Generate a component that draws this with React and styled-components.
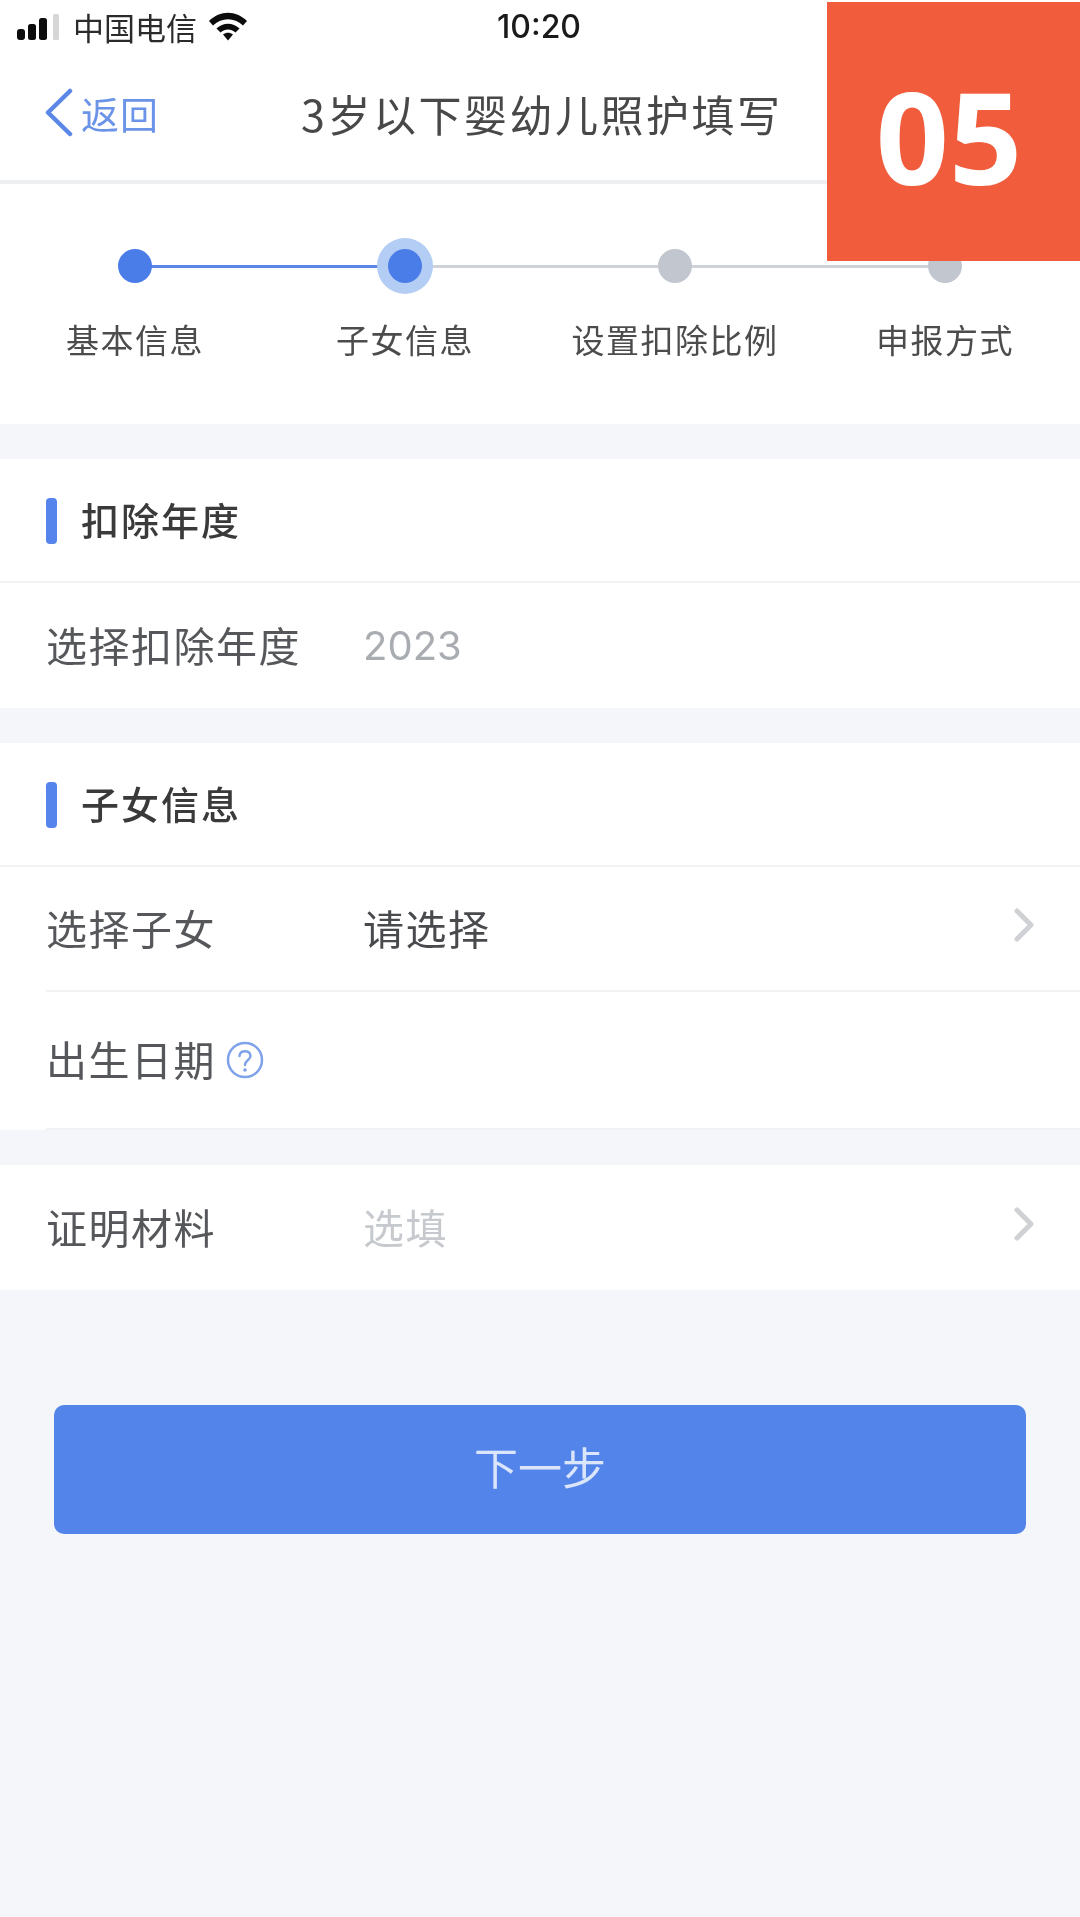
import React from "react";
import styled, { createGlobalStyle } from "styled-components";

const GlobalStyle = createGlobalStyle`
  html, body {
    margin: 0;
    padding: 0;
    background: #f4f6fa;
  }
  * {
    box-sizing: border-box;
  }
`;

const CJK = `"Noto Sans CJK SC", "Noto Sans", sans-serif`;

const steps = [
  { label: "基本信息", state: "done" },
  { label: "子女信息", state: "current" },
  { label: "设置扣除比例", state: "todo" },
  { label: "申报方式", state: "todo", last: true },
];

function Chevron() {
  return (
    <ChevronIcon width="24" height="36" viewBox="0 0 24 36" fill="none">
      <path d="M4 4 L18 18 L4 32" stroke="#cfd1d4" strokeWidth="5" strokeLinecap="round" strokeLinejoin="round" />
    </ChevronIcon>
  );
}

export default function App() {
  return (
    <Page>
      <GlobalStyle />
      <Header>
        <StatusBar>
          <StatusLeft>
            <svg width="44" height="28" viewBox="0 0 44 28">
              <rect x="1" y="17" width="8" height="11" rx="3" fill="#0c0c0c" />
              <rect x="12" y="12" width="8" height="16" rx="2.500" fill="#0c0c0c" />
              <rect x="23" y="6" width="8" height="22" rx="2.500" fill="#0c0c0c" />
              <rect x="37" y="2" width="6" height="26" rx="1.500" fill="#d6d6d6" />
            </svg>
            <Carrier>中国电信</Carrier>
            <svg width="40" height="30" viewBox="0 0 40 30">
              <path d="M1 10 C12 -1 28 -1 39 10 L35 14.500 C26 6 14 6 5 14.500 Z" fill="#0c0c0c" />
              <path d="M8.500 17.500 C15 11 25 11 31.500 17.500 L27.500 21.500 C23 17.500 17 17.500 12.500 21.500 Z" fill="#0c0c0c" />
              <path d="M15 23.500 C18 21 22 21 25 23.500 L20 29.500 Z" fill="#0c0c0c" />
            </svg>
          </StatusLeft>
          <Time>10:20</Time>
        </StatusBar>
        <NavBar>
          <BackLink>
            <svg width="32" height="50" viewBox="0 0 32 50" fill="none">
              <path d="M27 3 L5 24.500 L27 46" stroke="#5b88e6" strokeWidth="4.500" strokeLinecap="round" strokeLinejoin="round" />
            </svg>
            <span>返回</span>
          </BackLink>
          <Title>3岁以下婴幼儿照护填写</Title>
        </NavBar>
      </Header>

      <Stepper>
        {steps.map((step) => (
          <Step key={step.label}>
            {!step.last && <Connector $active={step.state === "done"} />}
            <Dot $state={step.state} />
            <StepLabel>{step.label}</StepLabel>
          </Step>
        ))}
      </Stepper>

      <Section>
        <SectionHead>
          <SectionMark />
          <SectionTitle>扣除年度</SectionTitle>
        </SectionHead>
        <Row>
          <RowLabel>选择扣除年度</RowLabel>
          <YearValue>2023</YearValue>
        </Row>
      </Section>

      <Section>
        <SectionHead>
          <SectionMark />
          <SectionTitle>子女信息</SectionTitle>
        </SectionHead>
        <Row $divider>
          <RowLabel>选择子女</RowLabel>
          <RowValue>请选择</RowValue>
          <Chevron />
        </Row>
        <Row $divider $tall>
          <RowLabel>
            出生日期
            <HelpIcon width="38" height="38" viewBox="0 0 38 38" fill="none">
              <circle cx="19" cy="19" r="17" stroke="#7fa2ea" strokeWidth="2.500" />
              <path d="M13.500 15 C13.500 8.500 24.500 8.500 24.500 15 C24.500 19 19 19 19 24" stroke="#7fa2ea" strokeWidth="2.500" strokeLinecap="round" />
              <circle cx="19" cy="29" r="1.800" fill="#7fa2ea" />
            </HelpIcon>
          </RowLabel>
        </Row>
      </Section>

      <Section>
        <Row>
          <RowLabel>证明材料</RowLabel>
          <RowValue $placeholder>选填</RowValue>
          <Chevron />
        </Row>
      </Section>

      <NextButton type="button">下一步</NextButton>

      <Badge>05</Badge>
    </Page>
  );
}

const Page = styled.div`
  position: relative;
  width: 1080px;
  min-height: 1917px;
  overflow: hidden;
  background: #f4f6fa;
  font-family: ${CJK};
  filter: blur(0.5px);
`;

const Header = styled.header`
  background: #fff;
  border-bottom: 4px solid #eeeff1;
  height: 184px;
`;

const StatusBar = styled.div`
  position: relative;
  display: flex;
  align-items: center;
  height: 52px;
  padding: 0 0 0 16px;
`;

const StatusLeft = styled.div`
  display: flex;
  align-items: center;
  gap: 13px;
`;

const Carrier = styled.span`
  font-size: 31px;
  color: #2b2b2b;
  margin-right: -2px;
`;

const Time = styled.span`
  position: absolute;
  left: 497px;
  font-family: Inter, sans-serif;
  font-size: 32px;
  font-weight: 500;
  color: #1a1a1a;
`;

const NavBar = styled.div`
  position: relative;
  display: flex;
  align-items: center;
  height: 119px;
  padding: 2px 0 0 43px;
`;

const BackLink = styled.div`
  display: flex;
  align-items: center;
  gap: 6px;
  font-size: 38px;
  letter-spacing: 1px;
  color: #6b94e8;
`;

const Title = styled.h1`
  margin: 0 0 0 142px;
  font-size: 43px;
  font-weight: 400;
  letter-spacing: 2.500px;
  color: #484848;
  white-space: nowrap;
`;

const Stepper = styled.div`
  display: grid;
  grid-template-columns: repeat(4, 270px);
  background: #fff;
  height: 240px;
  padding-top: 61px;
`;

const Step = styled.div`
  position: relative;
  display: flex;
  flex-direction: column;
  align-items: center;
`;

const Connector = styled.div`
  position: absolute;
  top: 20px;
  left: 135px;
  width: 270px;
  height: 3px;
  background: ${(p) => (p.$active ? "#5b84e4" : "#cfd3d9")};
`;

const Dot = styled.div`
  position: relative;
  width: 34px;
  height: 34px;
  margin-top: 4px;
  border-radius: 50%;
  background: ${(p) => (p.$state === "todo" ? "#c1c6cf" : "#4b7de8")};
  box-shadow: ${(p) => (p.$state === "current" ? "0 0 0 11px #b3cdf4" : "none")};
`;

const StepLabel = styled.div`
  margin-top: 34px;
  font-size: 33px;
  line-height: 44px;
  color: #4c4c4c;
  white-space: nowrap;
  letter-spacing: 1.500px;
`;

const Section = styled.section`
  margin-top: 35px;
  background: #fff;
`;

const SectionHead = styled.div`
  display: flex;
  align-items: center;
  gap: 24px;
  height: 124px;
  padding-left: 46px;
  border-bottom: 2px solid #f1f2f4;
`;

const SectionMark = styled.div`
  width: 11px;
  height: 46px;
  margin-top: 2px;
  border-radius: 4px;
  background: #5584ec;
`;

const SectionTitle = styled.h2`
  margin: -4px 0 0;
  font-size: 38px;
  font-weight: 500;
  letter-spacing: 2px;
  color: #3a3a3a;
`;

const Row = styled.div`
  position: relative;
  display: flex;
  align-items: center;
  height: ${(p) => (p.$tall ? "138px" : "125px")};
  margin-left: 46px;
  padding: 0 46px 4px 0;
  border-bottom: ${(p) => (p.$divider ? "2px solid #f1f2f4" : "none")};
`;

const RowLabel = styled.div`
  display: flex;
  align-items: center;
  flex: 0 0 317px;
  font-size: 41px;
  letter-spacing: 1.500px;
  color: #55575a;
  white-space: nowrap;
`;

const RowValue = styled.div`
  flex: 1;
  font-size: 41px;
  letter-spacing: 1.500px;
  color: ${(p) => (p.$placeholder ? "#c6c9cd" : "#484a4d")};
`;

const YearValue = styled.div`
  padding-top: 4px;
  font-family: Inter, sans-serif;
  font-size: 40px;
  color: #a9acb1;
`;

const HelpIcon = styled.svg`
  margin-left: 10px;
  margin-top: 4px;
`;

const ChevronIcon = styled.svg`
  flex: none;
  margin-right: -3px;
  margin-top: -4px;
`;

const NextButton = styled.button`
  display: block;
  width: 972px;
  height: 129px;
  margin: 115px 0 0 54px;
  padding: 0 0 8px;
  border: none;
  border-radius: 10px;
  background: #5284ea;
  font-family: ${CJK};
  font-size: 44px;
  color: #dbe5fb;
`;

const Badge = styled.div`
  position: absolute;
  top: 2px;
  left: 827px;
  width: 253px;
  height: 259px;
  display: flex;
  align-items: center;
  justify-content: center;
  padding: 8px 9px 0 0;
  background: #f15d3c;
  color: #fff;
  font-family: "Noto Sans", sans-serif;
  font-size: 128px;
  font-weight: 700;
`;
